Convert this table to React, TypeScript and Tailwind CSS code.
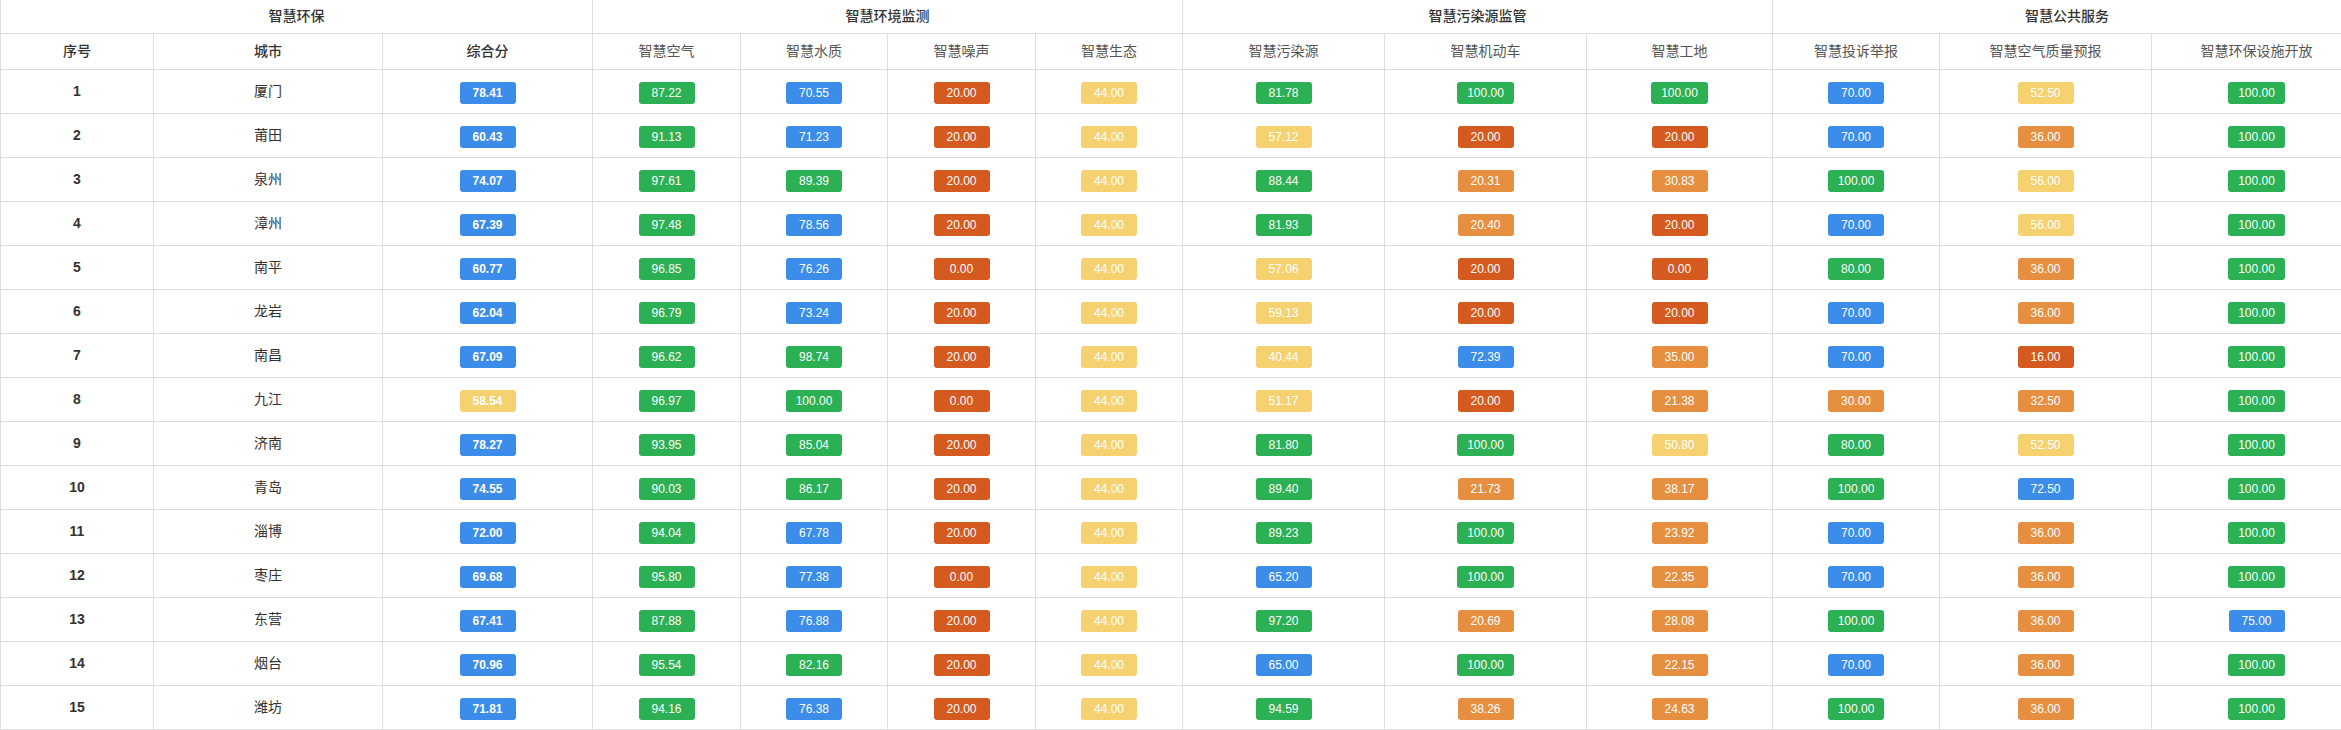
import React from 'react';

type Row = [number, string, number, number[]];

const GROUPS = [
  { title: '智慧环保', span: 3 },
  { title: '智慧环境监测', span: 4 },
  { title: '智慧污染源监管', span: 3 },
  { title: '智慧公共服务', span: 3 },
];

const HEADERS = ['序号', '城市', '综合分', '智慧空气', '智慧水质', '智慧噪声', '智慧生态', '智慧污染源', '智慧机动车', '智慧工地', '智慧投诉举报', '智慧空气质量预报', '智慧环保设施开放'];

const WIDTHS = [153, 229, 210, 148, 147, 148, 147, 202, 202, 186, 167, 212, 210];

const ROWS: Row[] = [
  [1, '厦门', 78.41, [87.22, 70.55, 20, 44, 81.78, 100, 100, 70, 52.5, 100]],
  [2, '莆田', 60.43, [91.13, 71.23, 20, 44, 57.12, 20, 20, 70, 36, 100]],
  [3, '泉州', 74.07, [97.61, 89.39, 20, 44, 88.44, 20.31, 30.83, 100, 56, 100]],
  [4, '漳州', 67.39, [97.48, 78.56, 20, 44, 81.93, 20.4, 20, 70, 56, 100]],
  [5, '南平', 60.77, [96.85, 76.26, 0, 44, 57.06, 20, 0, 80, 36, 100]],
  [6, '龙岩', 62.04, [96.79, 73.24, 20, 44, 59.13, 20, 20, 70, 36, 100]],
  [7, '南昌', 67.09, [96.62, 98.74, 20, 44, 40.44, 72.39, 35, 70, 16, 100]],
  [8, '九江', 58.54, [96.97, 100, 0, 44, 51.17, 20, 21.38, 30, 32.5, 100]],
  [9, '济南', 78.27, [93.95, 85.04, 20, 44, 81.8, 100, 50.8, 80, 52.5, 100]],
  [10, '青岛', 74.55, [90.03, 86.17, 20, 44, 89.4, 21.73, 38.17, 100, 72.5, 100]],
  [11, '淄博', 72.0, [94.04, 67.78, 20, 44, 89.23, 100, 23.92, 70, 36, 100]],
  [12, '枣庄', 69.68, [95.8, 77.38, 0, 44, 65.2, 100, 22.35, 70, 36, 100]],
  [13, '东营', 67.41, [87.88, 76.88, 20, 44, 97.2, 20.69, 28.08, 100, 36, 75]],
  [14, '烟台', 70.96, [95.54, 82.16, 20, 44, 65.0, 100, 22.15, 70, 36, 100]],
  [15, '潍坊', 71.81, [94.16, 76.38, 20, 44, 94.59, 38.26, 24.63, 100, 36, 100]],
];

// score bands: red <=20, orange <40, yellow <60, blue <80, green >=80
const badgeColor = (v: number) => {
  if (v <= 20) return 'bg-[#d55a1f]';
  if (v < 40) return 'bg-[#e68f40]';
  if (v < 60) return 'bg-[#f5d170]';
  if (v < 80) return 'bg-[#3b8de9]';
  return 'bg-[#2bb053]';
};

const Badge: React.FC<{ value: number; bold?: boolean }> = ({ value, bold }) => (
  <span
    className={`inline-block min-w-[56px] rounded-[3px] px-[10px] text-[12px] leading-[22px] text-white ${bold ? 'font-bold' : 'font-normal'} ${badgeColor(value)}`}
  >
    {value.toFixed(2)}
  </span>
);

const cell = 'border border-[#dedede] text-center align-middle p-0';

export default function App() {
  return (
    <div className="w-[2341px] h-[730px] overflow-hidden bg-white" style={{ fontFamily: '"Liberation Sans", "Noto Sans CJK SC", sans-serif' }}>
      <table className="table-fixed border-collapse w-[2361px] -mt-px">
        <colgroup>
          {WIDTHS.map((w, i) => (
            <col key={i} style={{ width: w }} />
          ))}
        </colgroup>
        <thead>
          <tr className="h-[34px]">
            {GROUPS.map(g => (
              <th key={g.title} colSpan={g.span} className={`${cell} text-[14px] font-medium text-[#333]`}>
                {g.title}
              </th>
            ))}
          </tr>
          <tr className="h-[36px]">
            {HEADERS.map((h, i) => (
              <th key={h} className={`${cell} text-[14px] ${i < 3 ? 'font-medium text-[#333]' : 'font-normal text-[#555]'}`}>
                {h}
              </th>
            ))}
          </tr>
        </thead>
        <tbody>
          {ROWS.map(([no, city, total, scores]) => (
            <tr key={no} className="h-[44px]">
              <td className={`${cell} text-[14px] font-bold text-[#333]`}>{no}</td>
              <td className={`${cell} text-[14px] text-[#333]`}>{city}</td>
              <td className={cell}>
                <Badge value={total} bold />
              </td>
              {scores.map((s, i) => (
                <td key={i} className={cell}>
                  <Badge value={s} />
                </td>
              ))}
            </tr>
          ))}
        </tbody>
      </table>
    </div>
  );
}
